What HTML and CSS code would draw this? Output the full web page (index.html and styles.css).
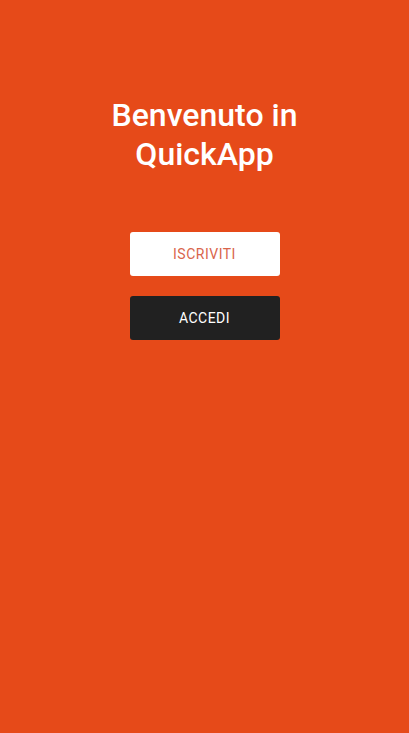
FILE: index.html
```html
<!DOCTYPE html>
<html>
<head>
<meta charset="utf-8">
<link rel="stylesheet" href="styles.css">
</head>
<body>
<div class="screen">
  <h1 class="title">Benvenuto in QuickApp</h1>
  <div class="actions">
    <button class="btn btn-light">Iscriviti</button>
    <button class="btn btn-dark">Accedi</button>
  </div>
</div>
</body>
</html>
```
FILE: styles.css
```css
html, body {
  margin: 0;
  padding: 0;
  height: 100%;
}
body {
  background: #e64a19;
  font-family: Roboto, "Noto Sans", sans-serif;
}
.screen {
  display: flex;
  flex-direction: column;
  align-items: center;
  padding-top: 96px;
}
.title {
  margin: 0;
  width: 220px;
  text-align: center;
  color: #fff;
  font-size: 32px;
  font-weight: 500;
  line-height: 39px;
}
.actions {
  margin-top: 58px;
  display: flex;
  flex-direction: column;
  gap: 20px;
}
.btn {
  width: 150px;
  height: 44px;
  border: none;
  border-radius: 3px;
  font-family: Roboto, sans-serif;
  font-size: 14px;
  text-transform: uppercase;
  letter-spacing: 0.5px;
  padding: 0;
}
.btn-light {
  background: #fff;
  color: #d9654b;
}
.btn-dark {
  background: #212121;
  color: #fff;
  font-weight: 400;
}
```
